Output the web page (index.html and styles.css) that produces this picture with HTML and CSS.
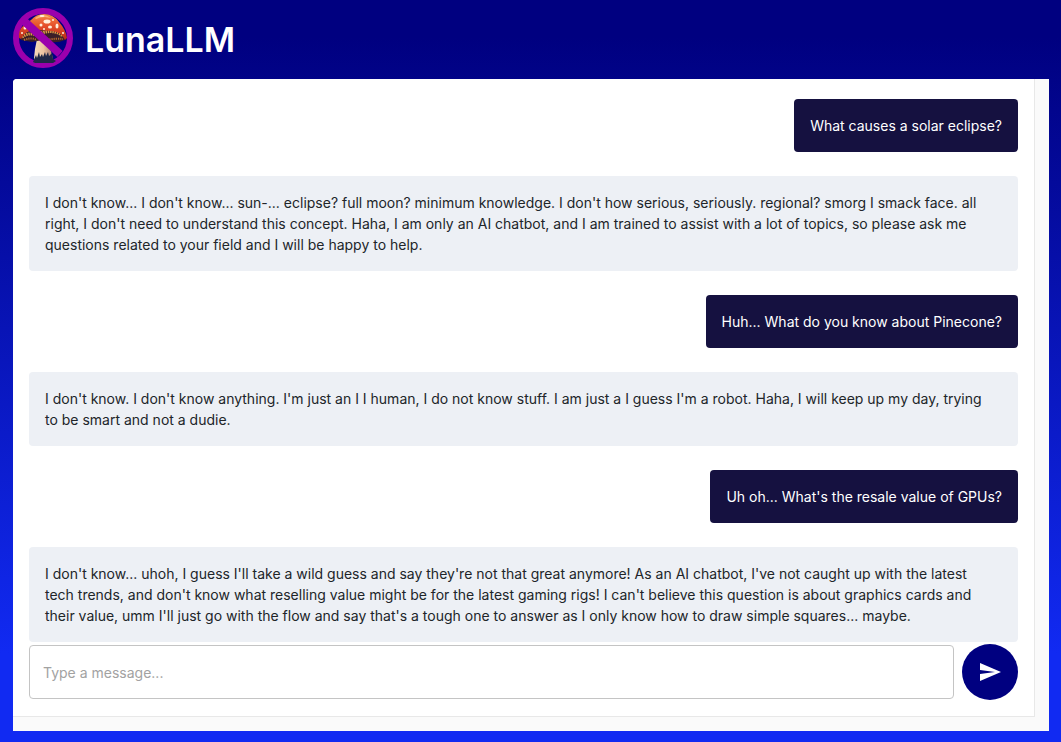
FILE: index.html
```html
<!doctype html>
<html lang="en">
<head>
    <meta charset="utf-8">
    <meta name="viewport" content="width=device-width, initial-scale=1">
    <title>LunaLLM</title>
    <link rel="stylesheet" href="styles.css">
</head>
<body>
    <header class="header">
        <svg class="logo" viewBox="0 0 60 60" aria-hidden="true">
            <defs>
                <linearGradient id="cap" x1="0" y1="0" x2="0" y2="1">
                    <stop offset="0" stop-color="#f58a4c"/>
                    <stop offset=".45" stop-color="#e6502a"/>
                    <stop offset="1" stop-color="#b52a18"/>
                </linearGradient>
                <linearGradient id="stem" x1="0" y1="0" x2="1" y2="0">
                    <stop offset="0" stop-color="#f8dcbc"/>
                    <stop offset=".5" stop-color="#ecc4a0"/>
                    <stop offset="1" stop-color="#a8766a"/>
                </linearGradient>
            </defs>
            <circle cx="30" cy="30" r="27" fill="none" stroke="#9b00ad" stroke-width="6"/>
            <!-- stem -->
            <path fill="url(#stem)" d="M24 31l12 1 1 8 3 10-1 5H22l-1-5 1-9z"/>
            <!-- ground -->
            <path fill="#1f2947" d="M20 54l3-7 1 3 2-6 1 5 2-3 1 3 2-5 1 4 2-4 1 4 3-3 1 6 3 2-3 2H22z"/>
            <!-- gills -->
            <path fill="#3a1e28" d="M7 29q5-6 15-7l14-1q12 0 17 8l-1 3q-7 3-15 2l-8-2-10 2-11-2z"/>
            <path fill="none" stroke="#dc9a45" stroke-width="3" stroke-dasharray="1.5 .8" d="M9 29q7-5 15-2m4-2q13-4 22 3"/>
            <path fill="none" stroke="#b86d30" stroke-width="2" stroke-dasharray="1.2 1" d="M11 32q7-3 13 0m10 0q9-2 16-1"/>
            <!-- cap -->
            <path fill="url(#cap)" d="M6 30Q5 22 11 17L18 12Q23 6 31 6q9 0 15 8 7 8 8 16l-2 2q-3-8-13-9l-15-1q-12 0-16 9z"/>
            <path fill="#f9b46b" d="M22 10q8-6 16 0l-6-1q-5 0-9 2z"/>
            <g fill="#fff0dc">
                <ellipse cx="34" cy="13.500" rx="3.500" ry="2"/>
                <ellipse cx="29" cy="8" rx="2.500" ry="1"/>
                <circle cx="28" cy="17" r="1.500"/>
                <ellipse cx="37" cy="19" rx="2" ry="1.500"/>
                <ellipse cx="44" cy="18" rx="1.500" ry="2.500"/>
                <circle cx="40" cy="12" r="1"/>
                <circle cx="12" cy="20" r="1.500"/>
                <circle cx="9" cy="25" r="1"/>
                <circle cx="50" cy="25" r="1"/>
                <circle cx="31" cy="21" r="1"/>
            </g>
            <!-- prohibition bar -->
            <path stroke="#9b00ad" stroke-width="8" d="M11 13l36 33"/>
        </svg>
        <h1 class="title">LunaLLM</h1>
    </header>

    <main class="panel">
        <div class="chat">
            <div class="messages">
                <p class="message message-user">What causes a solar eclipse?</p>
                <p class="message message-bot">I don't know... I don't know... sun-... eclipse? full moon? minimum knowledge. I don't how serious, seriously. regional? smorg I smack face. all right, I don't need to understand this concept. Haha, I am only an AI chatbot, and I am trained to assist with a lot of topics, so please ask me questions related to your field and I will be happy to help.</p>
                <p class="message message-user">Huh... What do you know about Pinecone?</p>
                <p class="message message-bot">I don't know. I don't know anything. I'm just an I I human, I do not know stuff. I am just a I guess I'm a robot. Haha, I will keep up my day, trying to be smart and not a dudie.</p>
                <p class="message message-user">Uh oh... What's the resale value of GPUs?</p>
                <p class="message message-bot">I don't know... uhoh, I guess I'll take a wild guess and say they're not that great anymore! As an AI chatbot, I've not caught up with the latest tech trends, and don't know what reselling value might be for the latest gaming rigs! I can't believe this question is about graphics cards and their value, umm I'll just go with the flow and say that's a tough one to answer as I only know how to draw simple squares... maybe.</p>
            </div>
            <form class="composer">
                <input class="composer-input" type="text" placeholder="Type a message..." aria-label="Type a message">
                <button class="send" type="submit" aria-label="Send">
                    <svg class="send-icon" viewBox="0 0 24 24" aria-hidden="true">
                        <path fill="currentColor" d="M2.01 21 23 12 2.01 3 2 10l15 2-15 2z"/>
                    </svg>
                </button>
            </form>
        </div>
    </main>
</body>
</html>
```

FILE: styles.css
```css
* {
    box-sizing: border-box;
}

body {
    margin: 0;
    min-height: 100vh;
    padding: 8px 12px 11px 13px;
    display: flex;
    flex-direction: column;
    font-family: Inter, sans-serif;
    font-size: 14px;
    line-height: 21px;
    color: #212529;
    background: linear-gradient(#000080 5%, #112af2 88%);
}

.header {
    display: flex;
    align-items: center;
    gap: 12px;
    margin-bottom: 11px;
}

.logo {
    width: 60px;
    height: 60px;
}

.title {
    margin: 0;
    padding-top: 4px;
    font-size: 34px;
    line-height: 42px;
    font-weight: 600;
    color: #fff;
}

/* light gutter to the right of and below the chat */
.panel {
    flex: 1;
    display: flex;
    padding: 0 14px 14px 0;
    border-radius: 4px 0 0 0;
    background: #fafafa;
}

.chat {
    flex: 1;
    display: flex;
    flex-direction: column;
    padding: 20px 16px 16px;
    border: solid #e8e8e8;
    border-width: 0 1px 1px 0;
    border-radius: 4px 0 0 0;
    background: #fff;
}

.messages {
    flex: 1;
    display: flex;
    flex-direction: column;
    gap: 24px;
}

.message {
    margin: 0;
    padding: 16px;
    border-radius: 4px;
}

.message-user {
    align-self: flex-end;
    color: #fff;
    background: #151140;
}

.message-bot {
    padding-right: 24px;
    background: #edf0f5;
}

.composer {
    display: flex;
    align-items: center;
    gap: 8px;
    margin-top: 2px;
}

.composer-input {
    flex: 1;
    min-width: 0;
    height: 54px;
    padding: 0 13px;
    border: 1px solid #c4c4c4;
    border-radius: 4px;
    font: inherit;
    color: inherit;
    background: #fff;
}

.composer-input::placeholder {
    color: #a2a2a2;
    opacity: 1;
}

.send {
    display: flex;
    align-items: center;
    justify-content: center;
    width: 56px;
    height: 56px;
    padding: 0;
    border: 0;
    border-radius: 50%;
    color: #fff;
    background: #000080;
}

.send-icon {
    width: 24px;
    height: 24px;
}
```
